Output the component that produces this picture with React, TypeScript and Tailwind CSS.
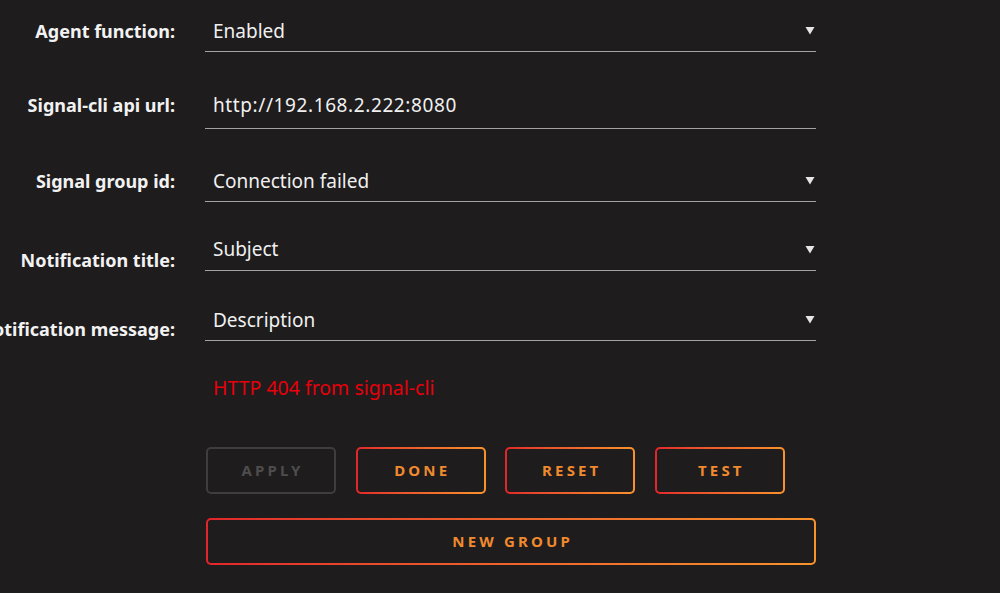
import React from "react";

const font = { fontFamily: '"Noto Sans", "Open Sans", sans-serif' };

function Arrow() {
  return (
    <svg width="10" height="9" viewBox="0 0 10 9" className="shrink-0">
      <polygon points="0.5,1 9.5,1 5,8.5" fill="#e6e6e6" />
    </svg>
  );
}

function Label({ text, extra = "" }: { text: string; extra?: string }) {
  return (
    <div className={`w-[175px] shrink-0 flex justify-end ${extra}`}>
      <span className="whitespace-nowrap text-[18px] font-bold text-[#f2f2f2] leading-[24px]">{text}</span>
    </div>
  );
}

function Field({
  value,
  select = true,
  h = "h-[42px]",
  track = "",
}: {
  value: string;
  select?: boolean;
  h?: string;
  track?: string;
}) {
  return (
    <div className={`ml-[30px] w-[611px] ${h} border-b-[1.5px] border-[#a3a3a3] flex items-center pl-[8px] pr-[1px]`}>
      <span className={`flex-1 text-[19px] text-[#f0f0f0] leading-[24px] ${track}`}>{value}</span>
      {select && <Arrow />}
    </div>
  );
}

function GradBtn({ label, w = "w-[130px]" }: { label: string; w?: string }) {
  return (
    <div className={`${w} h-[47px] rounded-[5px] p-[2px] bg-gradient-to-r from-[#e2252b] to-[#f8922c]`}>
      <div className="w-full h-full rounded-[3px] bg-[#1e1c1d] flex items-center justify-center">
        <span className="text-[15px] font-bold tracking-[0.21em] text-[#f08a2e] pl-[0.21em]">{label}</span>
      </div>
    </div>
  );
}

export default function App() {
  return (
    <div className="w-[1000px] h-[593px] bg-[#1e1c1d] overflow-hidden" style={font}>
      <div className="pt-[10px]">
        <div className="flex items-center h-[42px]">
          <Label text="Agent function:" />
          <Field value="Enabled" />
        </div>
        <div className="flex items-center h-[48px] mt-[29px]">
          <Label text="Signal-cli api url:" />
          <Field value="http://192.168.2.222:8080" select={false} h="h-[48px]" track="tracking-[0.6px]" />
        </div>
        <div className="flex items-center h-[42px] mt-[31px]">
          <Label text="Signal group id:" />
          <Field value="Connection failed" />
        </div>
        <div className="flex items-center h-[43px] mt-[26px]">
          <Label text="Notification title:" extra="mt-[20px]" />
          <Field value="Subject" h="h-[43px]" />
        </div>
        <div className="flex items-center h-[42px] mt-[28px]">
          <Label text="Notification message:" extra="mt-[18px]" />
          <Field value="Description" />
        </div>
        <div className="ml-[213px] mt-[35px] h-[24px] text-[19.5px] leading-[24px] text-[#e8000b]">HTTP 404 from signal-cli</div>
        <div className="ml-[206px] mt-[47px] flex gap-[19.6px]">
          <div className="w-[130px] h-[47px] rounded-[5px] border-2 border-[#3f3d3e] flex items-center justify-center">
            <span className="text-[15px] font-bold tracking-[0.21em] text-[#4e4c4d] pl-[0.21em]">APPLY</span>
          </div>
          <GradBtn label="DONE" />
          <GradBtn label="RESET" />
          <GradBtn label="TEST" />
        </div>
        <div className="ml-[206px] mt-[24px]">
          <GradBtn label="NEW GROUP" w="w-[610px]" />
        </div>
      </div>
    </div>
  );
}
